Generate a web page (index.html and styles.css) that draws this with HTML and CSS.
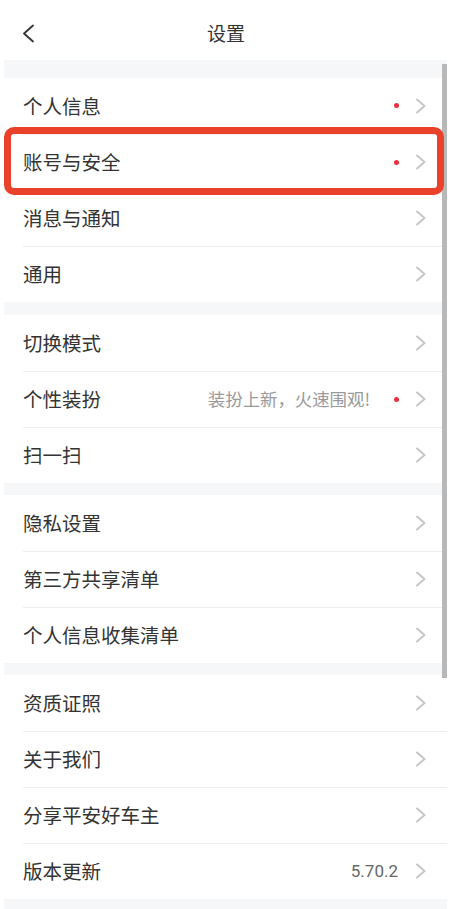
FILE: index.html
```html
<!DOCTYPE html>
<html lang="zh-CN">
<head>
<meta charset="utf-8">
<title>设置</title>
<link rel="stylesheet" href="styles.css">
</head>
<body>
<div class="page">
  <header class="nav">
    <svg class="back" width="14" height="22" viewBox="0 0 14 22"><path d="M12 2.5 L3 10.5 L12 18.5" fill="none" stroke="#333" stroke-width="1.8" stroke-linecap="round" stroke-linejoin="round"/></svg>
    <div class="title">设置</div>
  </header>
  <main class="list">
    <div class="gap first"></div>
    <section class="group">
      <div class="row"><span class="label">个人信息</span><span class="dot"></span><svg class="chev" viewBox="0 0 12 16"><path d="M2 1.5 L9.5 8 L2 14.5" /></svg></div>
      <div class="row"><span class="label">账号与安全</span><span class="dot"></span><svg class="chev" viewBox="0 0 12 16"><path d="M2 1.5 L9.5 8 L2 14.5" /></svg></div>
      <div class="row"><span class="label">消息与通知</span><svg class="chev" viewBox="0 0 12 16"><path d="M2 1.5 L9.5 8 L2 14.5" /></svg></div>
      <div class="row"><span class="label">通用</span><svg class="chev" viewBox="0 0 12 16"><path d="M2 1.5 L9.5 8 L2 14.5" /></svg></div>
    </section>
    <div class="gap g13"></div>
    <section class="group">
      <div class="row"><span class="label">切换模式</span><svg class="chev" viewBox="0 0 12 16"><path d="M2 1.5 L9.5 8 L2 14.5" /></svg></div>
      <div class="row"><span class="label">个性装扮</span><span class="note">装扮上新，火速围观!</span><span class="dot"></span><svg class="chev" viewBox="0 0 12 16"><path d="M2 1.5 L9.5 8 L2 14.5" /></svg></div>
      <div class="row"><span class="label">扫一扫</span><svg class="chev" viewBox="0 0 12 16"><path d="M2 1.5 L9.5 8 L2 14.5" /></svg></div>
    </section>
    <div class="gap"></div>
    <section class="group">
      <div class="row"><span class="label">隐私设置</span><svg class="chev" viewBox="0 0 12 16"><path d="M2 1.5 L9.5 8 L2 14.5" /></svg></div>
      <div class="row"><span class="label">第三方共享清单</span><svg class="chev" viewBox="0 0 12 16"><path d="M2 1.5 L9.5 8 L2 14.5" /></svg></div>
      <div class="row"><span class="label">个人信息收集清单</span><svg class="chev" viewBox="0 0 12 16"><path d="M2 1.5 L9.5 8 L2 14.5" /></svg></div>
    </section>
    <div class="gap"></div>
    <section class="group">
      <div class="row"><span class="label">资质证照</span><svg class="chev" viewBox="0 0 12 16"><path d="M2 1.5 L9.5 8 L2 14.5" /></svg></div>
      <div class="row"><span class="label">关于我们</span><svg class="chev" viewBox="0 0 12 16"><path d="M2 1.5 L9.5 8 L2 14.5" /></svg></div>
      <div class="row"><span class="label">分享平安好车主</span><svg class="chev" viewBox="0 0 12 16"><path d="M2 1.5 L9.5 8 L2 14.5" /></svg></div>
      <div class="row"><span class="label">版本更新</span><span class="version">5.70.2</span><svg class="chev" viewBox="0 0 12 16"><path d="M2 1.5 L9.5 8 L2 14.5" /></svg></div>
    </section>
    <div class="gap tail"></div>
  </main>
  <div class="scrollbar"></div>
  <div class="highlight"></div>
</div>
</body>
</html>
```
FILE: styles.css
```css
* { box-sizing: border-box; }
html, body { margin: 0; padding: 0; background: #fff; }
body {
  font-family: "Noto Sans CJK SC", "Noto Sans", sans-serif;
  color: #333;
  width: 452px;
  height: 909px;
  overflow: hidden;
}
.page { position: relative; width: 452px; height: 909px; }
.nav {
  height: 60px;
  display: flex;
  align-items: center;
  justify-content: center;
  position: relative;
}
.back { position: absolute; left: 21px; top: 23px; }
.title { font-size: 19px; line-height: 1; color: #333; margin-top: 4px; }
.list { margin: 0 5px 0 4px; }
.gap { height: 12px; background: #f6f7f8; }
.gap.first { height: 18px; }
.gap.g13 { height: 13px; }
.gap.tail { height: 20px; }
.group { background: #fff; }
.row {
  height: 56px;
  display: flex;
  align-items: center;
  margin-left: 19px;
  padding-right: 20px;
  border-top: 1px solid #efefef;
  padding-bottom: 1px;
}
.row:first-child { border-top: none; }
.label { font-size: 19.5px; line-height: 1.2; color: #333; flex: 1; }
.note { font-size: 17.4px; line-height: 1.2; color: #9a9a9a; margin-right: 24px; }
.version { font-size: 17px; color: #666; margin-right: 17px; font-family: "Roboto", "Noto Sans", sans-serif; }
.dot {
  width: 5px; height: 5px; border-radius: 50%;
  background: #ec2f3c;
  margin-right: 16px;
}
.chev {
  width: 12px; height: 16px;
  fill: none;
  stroke: #c6c6c6;
  stroke-width: 2;
  stroke-linecap: round;
  stroke-linejoin: round;
}
.scrollbar {
  position: absolute;
  left: 442px; top: 64px;
  width: 5px; height: 614px;
  background: #b8b8b8;
}
.highlight {
  position: absolute;
  left: 4px; top: 127px;
  width: 440px; height: 68px;
  border: 7px solid #e9412a;
  border-radius: 10px;
}
```
